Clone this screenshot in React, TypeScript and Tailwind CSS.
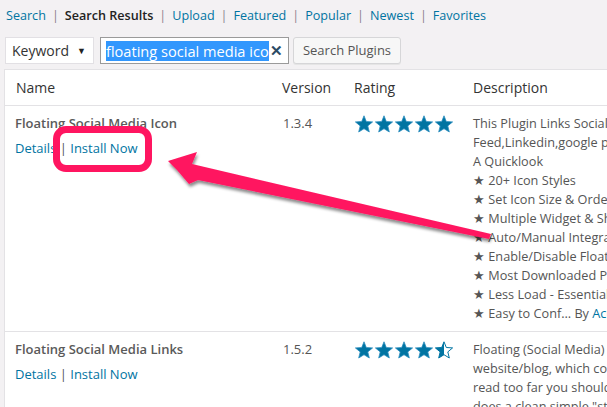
const FONT = { fontFamily: '"Open Sans", "Noto Sans", sans-serif' };

const Star = ({ x, half = false }: { x: number; half?: boolean }) => {
  const pts = "9,0.8 11.3,6.5 17.6,6.9 12.8,10.9 14.3,17 9,13.7 3.7,17 5.2,10.9 0.4,6.9 6.7,6.5";
  return (
    <g transform={`translate(${x},0)`}>
      {half ? (
        <>
          <clipPath id={`h${x}`}>
            <rect x="0" y="0" width="9" height="18" />
          </clipPath>
          <polygon points={pts} fill="#0074a2" clipPath={`url(#h${x})`} />
          <polygon points={pts} fill="none" stroke="#0074a2" strokeWidth="1" strokeLinejoin="round" />
        </>
      ) : (
        <polygon points={pts} fill="#0074a2" stroke="#2e8fc0" strokeWidth="0.8" strokeLinejoin="round" />
      )}
    </g>
  );
};

const Rating = ({ half }: { half?: boolean }) => (
  <svg width="98" height="18" viewBox="0 0 98 18" className="block">
    {[0, 20, 40, 60].map((x) => (
      <Star key={x} x={x} />
    ))}
    <Star x={80} half={half} />
  </svg>
);

const Sep = () => <span className="px-[6px] text-[#8a7f8d]">|</span>;

const PluginRow = ({
  name,
  version,
  half,
  lines,
}: {
  name: string;
  version: string;
  half?: boolean;
  lines: React.ReactNode[];
}) => (
  <div className="flex border-b border-[#e3e2e5] bg-white pb-[8px] pt-[8px]">
    <div className="w-[268px] shrink-0 pl-[10px]">
      <div className="text-[13px] font-semibold leading-[19px] text-[#5a5a5a]">{name}</div>
      <div className="mt-[6px] text-[13px] leading-[19px] text-[#0074a2]">
        Details <span className="text-[#555]">|</span> Install Now
      </div>
    </div>
    <div className="w-[71px] shrink-0 pl-[10px] text-[13px] leading-[19px] text-[#555]">{version}</div>
    <div className="w-[119px] shrink-0 pl-[11px] pt-[1px]">
      <Rating half={half} />
    </div>
    <div className="w-[300px] shrink-0 pl-[10px] text-[12.7px] leading-[19px] text-[#555]">
      {lines.map((l, i) => (
        <div key={i} className="whitespace-nowrap">
          {l}
        </div>
      ))}
    </div>
  </div>
);

export default function App() {
  return (
    <div className="relative h-[407px] w-[607px] overflow-hidden bg-[#f3f1f3]" style={FONT}>
      <nav className="flex h-[20px] items-center pl-[6px] pt-[13px] text-[12.6px] text-[#0074a2]">
        <span>Search</span>
        <Sep />
        <span className="font-semibold text-[#222]">Search Results</span>
        <Sep />
        <span>Upload</span>
        <Sep />
        <span>Featured</span>
        <Sep />
        <span>Popular</span>
        <Sep />
        <span>Newest</span>
        <Sep />
        <span>Favorites</span>
      </nav>

      <div className="mt-[17px] flex items-center pl-[5px]">
        <div className="flex h-[27px] w-[89px] items-center justify-between border border-[#e2e0e4] bg-white pl-[6px] pr-[7px] text-[14px] text-[#333]">
          <span>Keyword</span>
          <span className="text-[9px] text-[#222]">▼</span>
        </div>
        <div className="ml-[6px] flex h-[27px] w-[189px] items-center border border-[#9a9a9a] bg-white pl-[5px] text-[14.6px]">
          <span className="bg-[#3297fd] leading-[20px] text-white">floating social media ico</span>
          <span className="ml-[1px] text-[15px] font-bold leading-none text-[#2b4a63]">✕</span>
        </div>
        <div className="ml-[4px] flex h-[27px] w-[108px] items-center justify-center rounded-[3px] border border-[#d6d6d8] bg-[#f7f7f7] text-[13px] text-[#555] shadow-[0_1px_0_#e5e5e5]">
          Search Plugins
        </div>
      </div>

      <div className="ml-[4px] mt-[5px] border-l border-t border-[#e3e2e5] bg-white">
        <div className="flex h-[36px] items-center border-b border-[#e3e2e5] text-[14px] text-[#333]">
          <div className="w-[268px] shrink-0 pl-[11px]">Name</div>
          <div className="w-[71px] shrink-0 pl-[9px]">Version</div>
          <div className="w-[119px] shrink-0 pl-[10px]">Rating</div>
          <div className="pl-[10px]">Description</div>
        </div>
        <PluginRow
          name="Floating Social Media Icon"
          version="1.3.4"
          lines={[
            "This Plugin Links Social Media Icons to Facebook,Twitter,RSS",
            "Feed,Linkedin,google plus,Pinterest and more...",
            "A Quicklook",
            "★ 20+ Icon Styles",
            "★ Set Icon Size & Order",
            "★ Multiple Widget & Shortcode",
            "★ Auto/Manual Integration",
            "★ Enable/Disable Floating",
            "★ Most Downloaded Plugin",
            "★ Less Load - Essential",
            <>
              ★ Easy to Conf… By <span className="text-[#0074a2]">Acurax</span>
            </>,
          ]}
        />
        <PluginRow
          name="Floating Social Media Links"
          version="1.5.2"
          half
          lines={[
            "Floating (Social Media) Links is a plugin that adds a box to your",
            "website/blog, which contains links to social media so even if you",
            "read too far you should always see the links. The plugin",
            "does a clean simple \"static\" floating box",
          ]}
        />
      </div>

      {/* annotation */}
      <div className="absolute left-[53px] top-[126px] h-[46px] w-[99px] rounded-[13px] border-[7px] border-[#ff1560]" />
      <svg className="absolute left-0 top-0" width="607" height="407" viewBox="0 0 607 407">
        <defs>
          <filter id="sh" x="-10%" y="-30%" width="120%" height="160%">
            <feDropShadow dx="1" dy="3" stdDeviation="1.5" floodColor="#000" floodOpacity="0.45" />
          </filter>
        </defs>
        <polygon
          points="168,161 197,152 192,164 491,234 489,239 198,180 189,184 177,170"
          fill="#ff1560"
          filter="url(#sh)"
        />
      </svg>
    </div>
  );
}
